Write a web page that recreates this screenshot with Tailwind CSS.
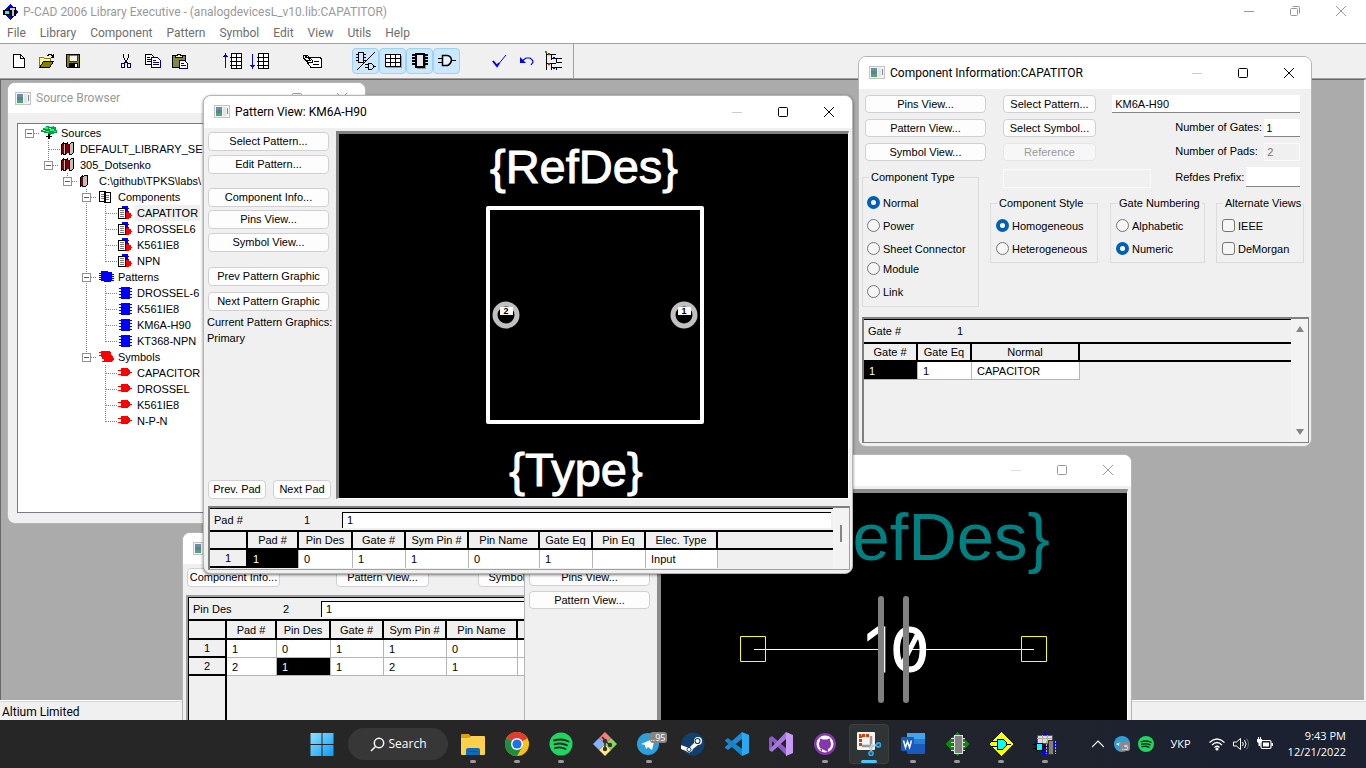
<!DOCTYPE html>
<html lang="en">
<head>
<meta charset="utf-8">
<title>P-CAD 2006 Library Executive</title>
<script src="https://cdn.jsdelivr.net/npm/@tailwindcss/browser@4"></script>
</head>
<body class="relative h-screen overflow-hidden flex flex-col bg-[#ababab] text-black text-[11px] leading-4 font-['Liberation_Sans',Arial,sans-serif] select-none">

<svg class="hidden">
  <symbol id="i-win" viewBox="0 0 16 13"><rect x=".5" y=".5" width="15" height="12" fill="#f4f4f4" stroke="#c4c4c4"/><path d="M2 2h6v9H2z" fill="#4f8a90"/><path d="M2 2h6v3H2z" fill="#6f8ca8"/><path d="M2 8h6v3H2z" fill="#58a07a"/><path d="M9 2h3v9H9z" fill="#e4e4e4"/><path d="M13 3h1v6h-1z" fill="#7c8a92"/></symbol>
  <symbol id="i-min" viewBox="0 0 12 12"><path d="M1 6.500h10" stroke="currentColor" fill="none"/></symbol>
  <symbol id="i-max" viewBox="0 0 12 12"><rect x="1.500" y="1.500" width="9" height="9" rx="1" stroke="currentColor" fill="none"/></symbol>
  <symbol id="i-close" viewBox="0 0 12 12"><path d="M1 1l10 10M11 1L1 11" stroke="currentColor" fill="none"/></symbol>
  <symbol id="i-tree" viewBox="0 0 20 16"><path d="M5 3h2V1h8v1h2v3h1v3h-3v1h-3v1h-1V9H9V8H5V7H2V5h2V3z" fill="#00a04a"/><path d="M6 2h3v2H6zM11 4h4v2h-4zM7 6h3v1H7zM15 6h2v1h-2z" fill="#2bff3a"/><path d="M10 1h4v1h-4zM4 5h2v1H4zM10 3h2v1h-2z" fill="#9be8d0"/><path d="M9 9h2v5H9zM7 11h2v1H7zM11 11h2v1h-2z" fill="#000"/></symbol>
  <symbol id="i-books" viewBox="0 0 20 16"><g stroke="#000"><path d="M3.500 3.500l2-2v10l-2 2z" fill="#8b0000"/><path d="M5.500 3.500l1-1h2v10l-1 1h-2z" fill="#c0c0c0"/><path d="M7.500 3.500l2-2v10l-2 2z" fill="#8b0000"/><path d="M11.500 3.500l2-2h2v10l-2 2h-2z" fill="#c0c0c0"/></g><path d="M4 4h2v8H4zM9 3h2v9H9z" fill="#8b0000"/></symbol>
  <symbol id="i-book" viewBox="0 0 20 16"><g stroke="#000"><path d="M3.500 4.500l2-2v9l-2 2z" fill="#8b0000"/><path d="M5.500 4.500l2-2h3v9l-2 2h-3z" fill="#c0c0c0"/></g><path d="M4 4h2v8H4z" fill="#8b0000"/></symbol>
  <symbol id="i-comps" viewBox="0 0 20 16"><g stroke="#000" fill="#fff"><path d="M3.500 2.500h6v10h-6zM8.500 3.500h6v10h-6z"/><path d="M5 5.500h3M5 7.500h3M5 9.500h3M10 6.500h3M10 8.500h3M10 10.500h3" stroke="#777"/></g></symbol>
  <symbol id="i-comp" viewBox="0 0 20 16"><path d="M7 1h6v2h1v1h-1v2h1v1h-7z" fill="#00f"/><path d="M10 7h4v1h2v2h1v1h-1v2h-2v1h-5z" fill="#f00"/><path d="M3.500 3.500h7v10h-7z" fill="#fff" stroke="#000"/><path d="M5 5.500h4M5 7.500h4M5 9.500h4M5 11.500h4" stroke="#777"/></symbol>
  <symbol id="i-pats" viewBox="0 0 20 16"><path d="M5 2h7v1h4v9h-1v1H8v-1H5z" fill="#00f"/><path d="M3 4.500h2M3 6.500h2M3 8.500h2M3 10.500h2M16 5.500h2M16 7.500h2M16 9.500h2M16 11.500h2" stroke="#00f"/></symbol>
  <symbol id="i-pat" viewBox="0 0 20 16"><path d="M6 2h9v12H6z" fill="#00f"/><path d="M4 3.500h13M4 6.500h13M4 9.500h13M4 12.500h13" stroke="#00f"/></symbol>
  <symbol id="i-syms" viewBox="0 0 20 16"><path d="M5 2h8l2 2v2l2 2v1l1 1-3 3H8v-3H6V8H5z" fill="#f00"/><path d="M3 3.500h3M3 6.500h3M6 9.500h3M6 12.500h3" stroke="#f00"/></symbol>
  <symbol id="i-sym" viewBox="0 0 20 16"><path d="M6 3h6l2 2 1 1v1h2v1h-2v1l-3 2H6z" fill="#f00"/><path d="M3 5.500h4M3 9.500h4" stroke="#f00"/></symbol>
</svg>

<!-- Application title -->
<header class="h-[23px] shrink-0 bg-white flex items-center pl-[2px] text-[12px] font-[Roboto,sans-serif] text-[#999]">
  <svg class="w-4 h-4 mr-[5px]" viewBox="0 0 16 16" shape-rendering="crispEdges"><path d="M8 0l8 8-8 8-8-8z" fill="#00f"/><path d="M6 3h8v9h-3v2H9v-3H6z" fill="#000"/><path d="M8 4h5v2H8z" fill="#ccc"/><path d="M10 6h2v6h-2z" fill="#c0c0c0"/><path d="M1 6h7v5H1z" fill="#000"/><path d="M3 7h4v3H3z" fill="#0ff"/></svg>
  <h1>P-CAD 2006 Library Executive - (analogdevicesL_v10.lib:CAPATITOR)</h1>
  <div class="ml-auto flex gap-[34px] pr-[19px] pb-[2px] text-[#999]">
    <button aria-label="Minimize"><svg class="size-3"><use href="#i-min"/></svg></button>
    <button aria-label="Restore"><svg class="size-3" viewBox="0 0 12 12" fill="none" stroke="currentColor"><rect x="1.500" y="3.500" width="7" height="7" rx="1"/><path d="M3.500 1.500h6q1 0 1 1v6"/></svg></button>
    <button aria-label="Close"><svg class="size-3"><use href="#i-close"/></svg></button>
  </div>
</header>

<nav class="h-[20px] shrink-0 bg-white flex items-center pl-[7px] gap-[14px] text-[12px] font-[Roboto,sans-serif] text-[#6d6d6d]">
  <a href="#">File</a><a href="#">Library</a><a href="#">Component</a><a href="#">Pattern</a><a href="#">Symbol</a><a href="#">Edit</a><a href="#">View</a><a href="#">Utils</a><a href="#">Help</a>
</nav>

<!-- Toolbar -->
<div class="h-[36px] shrink-0 bg-[#f0f0f0] border-t border-[#a0a0a0] border-b border-b-[#a0a0a0] flex">
  <div class="flex items-center pb-px gap-[26px] pl-[5px] pr-[6px] border-r border-[#a0a0a0] [&_button]:w-[27px] [&_button]:h-[26px] [&_button]:flex [&_button]:items-center [&_button]:justify-center [&_svg]:w-5 [&_svg]:h-5">
    <div class="flex">
      <button aria-label="New"><svg viewBox="0 0 20 20" shape-rendering="crispEdges"><path d="M4.500 3.500h7l4 4v9h-11z" fill="#fff" stroke="#000"/><path d="M11.500 3.500v4h4" fill="none" stroke="#000"/></svg></button>
      <button aria-label="Open"><svg viewBox="0 0 20 20" shape-rendering="crispEdges"><path d="M3.500 15.500v-9h4l1 1h6v3" fill="#ffff7a" stroke="#808000"/><path d="M3.500 16.500l4-6h10l-4 6z" fill="#808000" stroke="#000"/><path d="M11 4.500h1l1-1h2l1 1 1 1M17.500 3v4M15 6.500h3" fill="none" stroke="#000"/></svg></button>
      <button aria-label="Save"><svg viewBox="0 0 20 20" shape-rendering="crispEdges"><path d="M3.500 3.500h13v13h-12l-1-1z" fill="#808000" stroke="#000"/><path d="M6 4h8v6H6z" fill="#f0f0f0" stroke="#000" stroke-width=".5"/><path d="M6 12h9v4H6z" fill="#000"/><path d="M12 13h2v3h-2z" fill="#fff"/></svg></button>
    </div>
    <div class="flex">
      <button aria-label="Cut"><svg viewBox="0 0 20 20" fill="none" shape-rendering="crispEdges"><path d="M7.500 3v3l1 2 1 2 1 2M12.500 3v3l-1 2-2 4" stroke="#000"/><path d="M9 11l-1 2M11 11l1 2" stroke="#000080"/><rect x="5.500" y="12.500" width="3" height="4" rx="1" stroke="#000080"/><rect x="11.500" y="12.500" width="3" height="4" rx="1" stroke="#000080"/></svg></button>
      <button aria-label="Copy"><svg viewBox="0 0 20 20" shape-rendering="crispEdges"><path d="M2.500 3.500h6l2 2v8h-8z" fill="#fff" stroke="#000"/><path d="M4 6.500h3M4 8.500h5M4 10.500h5" stroke="#000"/><path d="M8.500 6.500h6l3 3v7h-9z" fill="#fff" stroke="#000080"/><path d="M10 9.500h3M10 11.500h6M10 13.500h6" stroke="#000080"/></svg></button>
      <button aria-label="Paste"><svg viewBox="0 0 20 20" shape-rendering="crispEdges"><path d="M2.500 4.500h13v12h-13z" fill="#87864a" stroke="#000"/><path d="M5.500 5.500v-1h2v-1h3v1h2v2h-7z" fill="#ffff66" stroke="#000"/><path d="M9.500 9.500h5l3 3v5h-8z" fill="#fff" stroke="#000080"/><path d="M11 12.500h3M11 14.500h5" stroke="#000080"/></svg></button>
    </div>
    <div class="flex">
      <button aria-label="Move up"><svg viewBox="0 0 20 20" shape-rendering="crispEdges" fill="none"><path d="M2.500 2v15M0 5.500h5M1 4.500h3" stroke="#00f"/><path d="M8.500 2.500h10v15h-10z" fill="#fff" stroke="#000"/><path d="M7 6.500h12M7 10.500h12M7 14.500h12M13.500 3v14" stroke="#000"/></svg></button>
      <button aria-label="Move down"><svg viewBox="0 0 20 20" shape-rendering="crispEdges" fill="none"><path d="M2.500 3v15M0 14.500h5M1 15.500h3" stroke="#00f"/><path d="M8.500 2.500h10v15h-10z" fill="#fff" stroke="#000"/><path d="M7 6.500h12M7 10.500h12M7 14.500h12M13.500 3v14" stroke="#000"/></svg></button>
    </div>
    <div class="flex">
      <button aria-label="Rename"><svg viewBox="0 0 20 20" fill="none" stroke="#000" shape-rendering="crispEdges"><path d="M7 6.500h10l1 1v9H8l-3-4z" fill="#fff"/><path d="M.5 4.500h4l5 5v2H5l-4-4z" fill="#fff"/><path d="M2 6.500h3l2 2M2 5.500h2M4 9.500h4"/><path d="M11 10.500h5M10 13.500h6"/></svg></button>
    </div>
    <div class="flex [&_button]:bg-[#cce8ff] [&_button]:border [&_button]:border-[#99d1ff] [&_button]:rounded-sm">
      <button aria-label="Pattern and symbol"><svg viewBox="0 0 20 20" fill="none" stroke="#000" shape-rendering="crispEdges"><path d="M2.500 1.500h5v10h-5zM0 3.500h2M0 6.500h2M0 9.500h2M8 3.500h2M8 6.500h2M8 9.500h2"/><path d="M19 1L1 19" shape-rendering="auto"/><path d="M12.500 12.500h3l2 2v2l-2 2h-3zM9 13.500h3M9 16.500h3M18 15.500h2"/></svg></button>
      <button aria-label="Pins table"><svg viewBox="0 0 20 20" shape-rendering="crispEdges"><path d="M3 5h16v12H3z" fill="#999"/><path d="M2.500 3.500h15v12h-15z" fill="#fff" stroke="#000"/><path d="M2 7.500h15M2 11.500h15M7.500 3v13M12.500 3v13" stroke="#000"/></svg></button>
      <button aria-label="Pattern"><svg viewBox="0 0 20 20" fill="none" shape-rendering="crispEdges"><path d="M7 4h9v14H7z" fill="#999"/><path d="M6 3h8v13H6z" stroke="#000" stroke-width="2" fill="#e4e8ec"/><path d="M2 4h3M2 7h3M2 10h3M2 13h3M15 4h3M15 7h3M15 10h3M15 13h3" stroke="#000" stroke-width="2"/></svg></button>
      <button aria-label="Symbol"><svg viewBox="0 0 20 20" fill="none" stroke="#000"><path d="M5.500 4.500h5q4 1 4 5-1 4-4 5h-5z" fill="#e8f4ff" stroke-width="1.500"/><path d="M1 7.500h5M1 11.500h5M15 9.500h4" shape-rendering="crispEdges"/></svg></button>
    </div>
    <div class="flex">
      <button aria-label="Validate"><svg viewBox="0 0 20 20" fill="none" stroke="#00f"><path d="M3 10l4 5L16 4" stroke-width="1"/><path d="M3 10l4 5 2-3" stroke-width="2"/></svg></button>
      <button aria-label="Undo"><svg viewBox="0 0 20 20" fill="none" stroke="#00f"><path d="M5 10l4-3h4q3 2 3 4l-2 3" stroke-width="1.200"/><path d="M3 6v6h6z" fill="#00f" stroke="none"/></svg></button>
      <button aria-label="Hierarchy"><svg viewBox="0 0 20 20" fill="none" stroke="#000" shape-rendering="crispEdges"><path d="M2.500 1v18M2 3.500h10M7.500 4v5M7 7.500h11M12.500 8v4M12 11.500h6M2 12.500h10M7.500 13v6M7 16.500h11M12.500 16v3"/><path d="M1 0h2v2H1z" fill="#0a0" stroke="none"/><path d="M4 2h2v2H4zM4 12h2v2H4z" fill="#f00" stroke="none"/><path d="M9 6h2v2H9zM9 16h2v2H9z" fill="#00f" stroke="none"/></svg></button>
    </div>
  </div>
</div>

<!-- Document area -->
<div class="flex-1 border-t border-l border-[#696969] border-r-2 border-r-[#f0f0f0]"></div>

<footer class="h-[20px] shrink-0 bg-[#f0f0f0] border-t border-white flex items-center pl-[2px] pt-[3px] shadow-[inset_0_1px_0_#d9d9d9]">
  <span class="font-[Roboto,sans-serif] text-[12px]">Altium Limited</span>
</footer>

<!-- Source Browser -->
<section class="absolute left-[7px] top-[82px] w-[359px] h-[442px] rounded-lg border border-[#b5b5b5] bg-[#f0f0f0] overflow-hidden flex flex-col">
  <div class="h-[30px] shrink-0 bg-white flex items-center pl-[7px] pr-[17px] gap-[5px] text-[#999]">
    <svg class="w-4 h-[13px]"><use href="#i-win"/></svg>
    <h2 class="font-[Roboto,sans-serif] text-[12px]">Source Browser</h2>
    <button class="ml-auto mr-[28px]" aria-label="Maximize"><svg class="size-3"><use href="#i-max"/></svg></button>
    <button aria-label="Close"><svg class="size-3"><use href="#i-close"/></svg></button>
  </div>
  <div id="tree" role="tree" class="flex-1 ml-[9px] mr-[9px] mt-[10px] mb-[10px] border border-[#7a7a84] bg-white pl-[2px] pt-px"></div>
</section>

<!-- Pins View -->
<section class="absolute left-[182px] top-[532px] w-[400px] h-[220px] rounded-tl-lg border border-[#b5b5b5] bg-[#f0f0f0] overflow-hidden flex flex-col">
  <div class="h-[31px] shrink-0 bg-white flex items-center pl-[10px]"><svg class="w-4 h-[13px]"><use href="#i-win"/></svg></div>
  <div class="flex pl-[4px] pt-[4px] [&_button]:w-[93px] [&_button]:shrink-0 [&_button]:h-[19px] [&_button]:leading-[17px] [&_button]:rounded [&_button]:border [&_button]:border-[#d0d0d0] [&_button]:bg-[#fdfdfd]">
    <button>Component Info...</button>
    <button class="ml-[56px]">Pattern View...</button>
    <button class="ml-[49px]">Symbol View...</button>
  </div>
  <div class="mt-[8px] ml-[3px] flex-1 border-t-2 border-l-2 border-[#a0a0a0] flex flex-col">
    <div class="flex-1 border-t border-l border-black">
      <div class="flex items-center h-[21px]">
        <label for="pin" class="w-[94px] pl-[4px]">Pin Des</label><span class="w-[38px]">2</span>
        <input id="pin" value="1" class="flex-1 min-w-0 h-[16px] border-t border-l border-black bg-white pl-[4px] outline-none">
      </div>
      <table class="w-full table-fixed border-separate border-spacing-0 border-t-2 border-black [&_th]:font-normal [&_th]:h-[19px] [&_th]:p-0 [&_th]:border-r-2 [&_th]:border-b-2 [&_th]:border-black [&_th]:bg-[#f0f0f0] [&_td]:h-[18px] [&_td]:py-0 [&_td]:pl-[5px] [&_td]:bg-white [&_td]:border-r [&_td]:border-b [&_td]:border-[#b5b5b5]">
        <colgroup><col class="w-[38px]"><col class="w-[50px]"><col class="w-[54px]"><col class="w-[53px]"><col class="w-[63px]"><col class="w-[71px]"><col></colgroup>
        <thead><tr><th></th><th>Pad #</th><th>Pin Des</th><th>Gate #</th><th>Sym Pin #</th><th>Pin Name</th><th class="!border-r-0"></th></tr></thead>
        <tbody>
          <tr><th class="!h-[18px]">1</th><td>1</td><td>0</td><td>1</td><td>1</td><td>0</td><td></td></tr>
          <tr><th class="!h-[18px]">2</th><td>2</td><td class="!bg-black text-white">1</td><td>1</td><td>2</td><td>1</td><td></td></tr>
        </tbody>
      </table>
      <div class="w-[38px] h-[80px] border-r-2 border-black"></div>
    </div>
  </div>
</section>

<!-- Symbol View -->
<section class="absolute left-[524px] top-[454px] w-[608px] h-[300px] rounded-t-lg border border-[#b5b5b5] bg-[#f0f0f0] overflow-hidden flex flex-col">
  <div class="h-[31px] shrink-0 bg-white flex items-center justify-end gap-[34px] pr-[17px] pb-[2px] text-[#999]">
    <button aria-label="Minimize" class="text-[#ddd]"><svg class="size-3"><use href="#i-min"/></svg></button>
    <button aria-label="Maximize"><svg class="size-3"><use href="#i-max"/></svg></button>
    <button aria-label="Close"><svg class="size-3"><use href="#i-close"/></svg></button>
  </div>
  <div class="flex-1 flex pt-[3px] pr-[3px]">
    <div class="w-[132px] shrink-0 flex flex-col gap-[5px] pl-[4px] pt-[79px]">
      <button class="w-[121px] h-[18px] leading-4 rounded border border-[#d0d0d0] bg-[#fdfdfd]">Pins View...</button>
      <button class="w-[121px] h-[18px] leading-4 rounded border border-[#d0d0d0] bg-[#fdfdfd]">Pattern View...</button>
    </div>
    <div class="flex-1 border-t-4 border-l-4 border-[#8c8c8c] border-r border-r-white bg-black">
      <svg class="w-full h-full" viewBox="661 493 466 260" preserveAspectRatio="xMidYMin slice" font-family="Liberation Sans, Arial, sans-serif">
        <text x="1050" y="560" text-anchor="end" font-size="67" fill="#008080">{RefDes}</text>
        <text x="865" y="672" font-size="62" fill="#fff" stroke="#fff" stroke-width="1" class="slashed-zero font-[Inter,sans-serif]">10</text>
        <path d="M754 649.500h124M909 649.500h125" stroke="#fff"/>
        <path d="M881 599v101M906 599v101" stroke="#808080" stroke-width="6" stroke-linecap="round"/>
        <path d="M740.500 636.500h25v25h-25zM1021.500 636.500h25v25h-25z" fill="none" stroke="#ff0"/>
      </svg>
    </div>
  </div>
</section>

<!-- Pattern View -->
<section class="absolute left-[203px] top-[95px] w-[650px] h-[479px] rounded-lg border border-[#b5b5b5] bg-[#f0f0f0] overflow-hidden flex flex-col shadow-[0_1px_3px_#0008]">
  <div class="h-[32px] shrink-0 bg-white flex items-center pl-[10px] pr-[17px] pb-px gap-[5px]">
    <svg class="w-4 h-[13px]"><use href="#i-win"/></svg>
    <h2 class="font-[Roboto,sans-serif] text-[12px]">Pattern View: KM6A-H90</h2>
    <button class="ml-auto text-[#ccc]" aria-label="Minimize"><svg class="size-3"><use href="#i-min"/></svg></button>
    <button class="mx-[29px]" aria-label="Maximize"><svg class="size-3"><use href="#i-max"/></svg></button>
    <button aria-label="Close"><svg class="size-3"><use href="#i-close"/></svg></button>
  </div>
  <div class="flex-1 flex pt-[3px] pr-[3px] min-h-0">
    <div class="w-[132px] shrink-0 flex flex-col pl-[4px] pt-px [&_button]:w-[121px] [&_button]:h-[19px] [&_button]:leading-[17px] [&_button]:rounded [&_button]:border [&_button]:border-[#d0d0d0] [&_button]:bg-[#fdfdfd]">
      <div class="flex flex-col gap-[4px]"><button>Select Pattern...</button><button>Edit Pattern...</button></div>
      <div class="flex flex-col gap-[3px] mt-[14px]"><button>Component Info...</button><button>Pins View...</button><button class="mt-px">Symbol View...</button></div>
      <div class="flex flex-col gap-[6px] mt-[15px]"><button>Prev Pattern Graphic</button><button>Next Pattern Graphic</button></div>
      <p class="mt-[3px] -ml-px whitespace-nowrap">Current Pattern Graphics:<br>Primary</p>
      <div class="mt-auto flex gap-[7px] [&>button]:!w-[58px]"><button>Prev. Pad</button><button>Next Pad</button></div>
    </div>
    <div class="flex-1 border-t-[3px] border-l-[3px] border-[#808080] border-r border-b border-r-white border-b-white bg-black">
      <svg class="w-full h-full" viewBox="339 134 509 364" font-family="Liberation Sans, Arial, sans-serif">
        <text x="584" y="183" text-anchor="middle" font-size="47" fill="#fff" stroke="#fff" stroke-width="1">{RefDes}</text>
        <text x="576" y="486" text-anchor="middle" font-size="47" fill="#fff" stroke="#fff" stroke-width="1">{Type}</text>
        <rect x="488" y="208" width="214" height="214" fill="none" stroke="#fff" stroke-width="4" stroke-linejoin="round"/>
        <g fill="#000" stroke="#c0c0c0" stroke-width="5"><circle cx="506" cy="315" r="11"/><circle cx="684" cy="315" r="11"/></g>
        <path d="M500 307h13v8h-13zM678 307h13v8h-13z" fill="#fff"/>
        <g font-size="9" font-weight="bold" text-anchor="middle"><text x="506" y="314">2</text><text x="684" y="314">1</text></g>
      </svg>
    </div>
  </div>
  <div class="h-[64px] shrink-0 mt-[7px] ml-[4px] mr-[2px] mb-[3px] border-2 border-[#808080] border-b-[#a0a0a0] border-b border-r border-r-[#a0a0a0] flex">
    <div class="flex-1 border-t border-black overflow-hidden">
      <div class="flex items-center h-[21px]">
        <label for="pad" class="w-[94px] pl-[4px]">Pad #</label><span class="w-[38px]">1</span>
        <input id="pad" value="1" class="flex-1 mr-[2px] h-[16px] border-t border-l border-black bg-white pl-[4px] outline-none">
      </div>
      <table class="w-full table-fixed border-separate border-spacing-0 border-t-2 border-black [&_th]:font-normal [&_th]:h-[18px] [&_th]:p-0 [&_th]:border-r-2 [&_th]:border-b-2 [&_th]:border-black [&_th]:bg-[#f0f0f0] [&_td]:h-[18px] [&_td]:py-0 [&_td]:pl-[5px] [&_td]:bg-white [&_td]:border-r [&_td]:border-[#b5b5b5]">
        <colgroup><col class="w-[38px]"><col class="w-[51px]"><col class="w-[54px]"><col class="w-[53px]"><col class="w-[63px]"><col class="w-[71px]"><col class="w-[53px]"><col class="w-[53px]"><col class="w-[72px]"><col></colgroup>
        <thead><tr><th></th><th>Pad #</th><th>Pin Des</th><th>Gate #</th><th>Sym Pin #</th><th>Pin Name</th><th>Gate Eq</th><th>Pin Eq</th><th>Elec. Type</th><th class="!border-r-0"></th></tr></thead>
        <tbody><tr><th class="!h-[18px]">1</th><td class="!bg-black text-white">1</td><td>0</td><td>1</td><td>1</td><td>0</td><td>1</td><td></td><td>Input</td><td class="!bg-[#f0f0f0] !border-0"></td></tr></tbody>
      </table>
    </div>
    <div class="w-[16px] pt-[17px] flex justify-center bg-[#f3f3f3]"><div class="w-[2px] h-[17px] bg-[#858585]"></div></div>
  </div>
</section>

<!-- Component Information -->
<section class="absolute left-[858px] top-[56px] w-[454px] h-[391px] rounded-lg border border-[#b5b5b5] bg-[#f0f0f0] overflow-hidden flex flex-col">
  <div class="h-[32px] shrink-0 bg-white flex items-center pl-[10px] pr-[16px] pb-px gap-[5px]">
    <svg class="w-4 h-[13px]"><use href="#i-win"/></svg>
    <h2 class="font-[Roboto,sans-serif] text-[12px]">Component Information:CAPATITOR</h2>
    <button class="ml-auto text-[#ccc]" aria-label="Minimize"><svg class="size-3"><use href="#i-min"/></svg></button>
    <button class="mx-[29px]" aria-label="Maximize"><svg class="size-3"><use href="#i-max"/></svg></button>
    <button aria-label="Close"><svg class="size-3"><use href="#i-close"/></svg></button>
  </div>
  <div class="flex pl-[6px] pr-[9px] pt-[6px] h-[228px] shrink-0">
    <div class="w-[121px] shrink-0 flex flex-col gap-[6px]">
      <button class="h-[18px] leading-4 rounded border border-[#d0d0d0] bg-[#fdfdfd]">Pins View...</button>
      <button class="h-[18px] leading-4 rounded border border-[#d0d0d0] bg-[#fdfdfd]">Pattern View...</button>
      <button class="h-[18px] leading-4 rounded border border-[#d0d0d0] bg-[#fdfdfd]">Symbol View...</button>
      <fieldset class="-ml-[3px] mr-[7px] mt-[2px] border border-[#dcdcdc] h-[138px] pl-[4px] pt-[11px] flex flex-col gap-[10px] [&_label]:flex [&_label]:items-center [&_label]:gap-[3px] [&_label]:h-[13px] [&_input]:appearance-none [&_input]:size-[13px] [&_input]:rounded-full [&_input]:border [&_input]:border-[#767676] [&_input]:bg-[#f6f6f6] [&_input:checked]:border-4 [&_input:checked]:border-[#005fb8] [&_input:checked]:bg-white">
        <legend class="ml-[2px] px-[2px]">Component Type</legend>
        <label><input type="radio" name="type" checked>Normal</label>
        <label><input type="radio" name="type">Power</label>
        <label><input type="radio" name="type">Sheet Connector</label>
        <label class="-mt-[3px]"><input type="radio" name="type">Module</label>
        <label><input type="radio" name="type">Link</label>
      </fieldset>
    </div>
    <div class="flex-1 pl-[17px] flex flex-col gap-[6px]">
      <div class="flex justify-between h-[18px]">
        <button class="w-[93px] leading-4 rounded border border-[#d0d0d0] bg-[#fdfdfd]">Select Pattern...</button>
        <input aria-label="Pattern name" value="KM6A-H90" class="w-[188px] mr-[4px] bg-white border-b border-[#858585] pl-[3px] outline-none">
      </div>
      <div class="flex justify-between h-[18px]">
        <button class="w-[93px] leading-4 rounded border border-[#d0d0d0] bg-[#fdfdfd]">Select Symbol...</button>
        <div class="w-[125px] mr-[4px] flex justify-between"><label for="gates">Number of Gates:</label><input id="gates" value="1" class="w-[36px] bg-white border-b border-[#858585] pl-[2px] outline-none"></div>
      </div>
      <div class="flex justify-between h-[18px]">
        <button disabled class="w-[93px] leading-4 rounded border border-[#e6e6e6] bg-[#f7f7f7] text-[#999]">Reference</button>
        <div class="w-[125px] mr-[4px] flex justify-between"><label for="pads">Number of Pads:</label><input id="pads" disabled value="2" class="w-[36px] border border-[#fafafa] text-[#777] pl-[2px]"></div>
      </div>
      <div class="flex justify-between h-[20px]">
        <input aria-label="Reference name" disabled class="w-[148px] h-[19px] mt-[2px] border border-[#fafafa]">
        <div class="w-[125px] mr-[4px] flex justify-between items-center"><label for="prefix">Refdes Prefix:</label><input id="prefix" class="w-[54px] h-[20px] bg-white border-b border-[#858585] outline-none"></div>
      </div>
      <div class="-ml-[13px] mt-[2px] flex gap-[12px] [&_fieldset]:h-[68px] [&_fieldset]:border [&_fieldset]:border-[#dcdcdc] [&_fieldset]:pl-[5px] [&_fieldset]:pt-[8px] [&_fieldset]:flex [&_fieldset]:flex-col [&_fieldset]:gap-[10px] [&_legend]:ml-[1px] [&_legend]:px-[2px] [&_label]:flex [&_label]:items-center [&_label]:gap-[3px] [&_label]:h-[13px] [&_input]:appearance-none [&_input]:size-[13px] [&_input]:border [&_input]:border-[#767676] [&_input]:bg-[#f6f6f6] [&_input[type=radio]]:rounded-full [&_input[type=checkbox]]:rounded-[3px] [&_input:checked]:border-4 [&_input:checked]:border-[#005fb8] [&_input:checked]:bg-white">
        <fieldset class="w-[108px] whitespace-nowrap"><legend>Component Style</legend><label><input type="radio" name="style" checked>Homogeneous</label><label><input type="radio" name="style">Heterogeneous</label></fieldset>
        <fieldset class="w-[95px] whitespace-nowrap"><legend>Gate Numbering</legend><label><input type="radio" name="num">Alphabetic</label><label><input type="radio" name="num" checked>Numeric</label></fieldset>
        <fieldset class="w-[86px] -ml-px whitespace-nowrap"><legend>Alternate Views</legend><label><input type="checkbox">IEEE</label><label><input type="checkbox">DeMorgan</label></fieldset>
      </div>
    </div>
  </div>
  <div class="flex-1 ml-[3px] mr-[2px] mb-[3px] border-2 border-[#808080] border-r border-b flex">
    <div class="flex-1 border-t border-black">
      <div class="flex items-center h-[22px]"><span class="w-[93px] pl-[4px]">Gate #</span><span>1</span></div>
      <table class="w-full table-fixed border-separate border-spacing-0 border-t-2 border-black [&_th]:font-normal [&_th]:h-[18px] [&_th]:p-0 [&_th]:border-r-2 [&_th]:border-b-2 [&_th]:border-black [&_td]:h-[18px] [&_td]:py-0 [&_td]:pl-[5px] [&_td]:bg-white [&_td]:border-r [&_td]:border-b [&_td]:border-[#b5b5b5]">
        <colgroup><col class="w-[54px]"><col class="w-[54px]"><col class="w-[108px]"><col></colgroup>
        <thead><tr><th>Gate #</th><th>Gate Eq</th><th>Normal</th><th class="!border-r-0"></th></tr></thead>
        <tbody><tr><td class="!bg-black text-white">1</td><td>1</td><td>CAPACITOR</td><td class="!bg-transparent !border-0"></td></tr></tbody>
      </table>
    </div>
    <div class="w-[17px] flex flex-col items-center justify-between py-[6px] bg-[#f3f3f3] text-[#858585]">
      <svg class="w-[10px] h-[8px]" viewBox="0 0 10 8"><path d="M5 1l4 6H1z" fill="currentColor"/></svg>
      <svg class="w-[10px] h-[8px]" viewBox="0 0 10 8"><path d="M5 7l4-6H1z" fill="currentColor"/></svg>
    </div>
  </div>
</section>

<!-- Taskbar -->
<div class="relative z-10 h-[48px] shrink-0 grid grid-cols-[1fr_auto_1fr] text-white bg-linear-to-r from-[#262626] from-50% to-[#1b2130] to-90% font-['Open_Sans',sans-serif]">
  <div></div>
  <div class="flex items-center [&>button]:relative [&>button]:w-[44px] [&>button]:h-[48px] [&>button]:flex [&>button]:items-center [&>button]:justify-center [&_svg]:size-6 [&_i]:absolute [&_i]:bottom-[5px] [&_i]:w-[6px] [&_i]:h-[3px] [&_i]:rounded-full [&_i]:bg-[#9a9a9a]">
    <button aria-label="Start"><svg viewBox="0 0 24 24"><defs><linearGradient id="wg" x1="0" y1="0" x2="1" y2="1"><stop offset="0" stop-color="#8fe0ff"/><stop offset="1" stop-color="#0a9bf5"/></linearGradient></defs><path d="M.5 1h11v11H.5zM12.500 1h11v11h-11zM.5 13h11v11H.5zM12.500 13h11v11h-11z" fill="url(#wg)"/></svg></button>
    <div class="ml-[4px] mr-[3px] w-[100px] h-[32px] rounded-full bg-[#373737] flex items-center gap-[4px] pl-[22px] text-[12px]"><svg class="!size-[15px]" viewBox="0 0 15 15" fill="none" stroke="#fff" stroke-width="1.500"><circle cx="9" cy="6" r="4.700"/><path d="M5.500 9.500L1 14"/></svg>Search</div>
    <button aria-label="File Explorer"><svg viewBox="0 0 24 24"><path d="M0 3q0-1 1-1h7l2 3v4H0z" fill="#dfa00c"/><path d="M0 6h8l2-2h13q1 0 1 1v17q0 1-1 1H1q-1 0-1-1z" fill="#ffd04c"/><path d="M5 23v-5q0-2 2-2h10q2 0 2 2v5z" fill="#0f6cbd"/><path d="M8 19h8v1H8z" fill="#0a4f91"/></svg><i></i></button>
    <button aria-label="Chrome"><svg viewBox="0 0 24 24"><circle cx="12" cy="12" r="12" fill="#fbc116"/><path d="M12 12L1.600 6A12 12 0 0 1 22.400 6z" fill="#e33b2e"/><path d="M12 6h10.400L12 12z" fill="#e33b2e"/><path d="M1.600 6A12 12 0 0 0 12 24l5.200-9L12 12z" fill="#1e8e3e"/><circle cx="12" cy="12" r="6" fill="#fff"/><circle cx="12" cy="12" r="4.600" fill="#1a73e8"/></svg><i></i></button>
    <button aria-label="Spotify"><svg viewBox="0 0 24 24"><circle cx="12" cy="12" r="11.500" fill="#1ed760"/><path d="M5 8.500q8-2.500 14.500 1M5.500 12.300q7-2 12.500 1M6 16q6-1.700 10.500 1" fill="none" stroke="#1c2b21" stroke-width="1.900" stroke-linecap="round"/></svg><i></i></button>
    <button aria-label="Git Bash"><svg viewBox="0 0 24 24"><path d="M12 0l6 6-6 6-6-6z" fill="#f57e7e"/><path d="M6 6l6 6-6 6-6-6z" fill="#80b3ff"/><path d="M18 6l6 6-6 6-6-6z" fill="#8dd35f"/><path d="M12 12l6 6-6 6-6-6z" fill="#ffe680"/><path d="M9 5l3 3v9M12 9l5 4" fill="none" stroke="#333" stroke-width="1.600"/><g fill="#333"><circle cx="12" cy="9" r="2.200"/><circle cx="12" cy="17" r="2.200"/><circle cx="17" cy="13" r="2.200"/></g></svg></button>
    <button aria-label="Telegram"><svg viewBox="0 0 24 24"><circle cx="11" cy="12" r="11" fill="#2ba0da"/><path d="M4 12l14-6-3 12-4-3-2 2-1-4z" fill="#fff"/></svg><i></i><span class="absolute left-[23px] top-[12px] w-[17px] h-[11px] rounded-[3px] bg-[#858585] text-[9px] leading-[11px] text-center">..95</span></button>
    <button aria-label="Steam"><svg viewBox="0 0 24 24"><circle cx="12" cy="12" r="11.500" fill="#123f6d"/><path d="M0 13l8 3 5-5v-2a4 4 0 1 1 4 4l-5 4a4 4 0 0 1-7 2l-5-2z" fill="#fff"/><circle cx="16.500" cy="9" r="2.500" fill="none" stroke="#17406b" stroke-width="1.200"/><circle cx="8" cy="17.500" r="2" fill="none" stroke="#17406b"/></svg></button>
    <button aria-label="Visual Studio Code"><svg viewBox="0 0 24 24"><path d="M17 0l7 3v18l-7 3z" fill="#2aa9f0"/><path d="M17 0v7L3 18l-3-2v-1z" fill="#1f8ad2"/><path d="M17 24v-7L3 6 0 8v1z" fill="#1684c9"/></svg></button>
    <button aria-label="Visual Studio"><svg viewBox="0 0 24 24"><path d="M0 6l3-2 15 13v7L3 9v7l-3 2z" fill="#8a5cc7"/><path d="M3 20l-3-2 17-18v7z" fill="#a777de"/><path d="M17 0l7 3v18l-7 3z" fill="#c89bf2"/></svg></button>
    <button aria-label="GitHub Desktop"><svg viewBox="0 0 24 24"><circle cx="12" cy="12" r="11" fill="#8637b0"/><circle cx="12" cy="12" r="8.500" fill="#fff"/><path d="M9 20v-3q-2 .5-3-1.500M9 17q-3-1-3-5 0-2 1-3-.3-1.500.2-2.500 1.200 0 2.500 1h4.600q1.300-1 2.500-1 .5 1 .2 2.500 1 1 1 3 0 4-3 5v3z" fill="#8637b0"/></svg><i></i></button>
    <button aria-label="Snipping Tool" class="before:absolute before:inset-x-[2px] before:inset-y-[4px] before:rounded before:border before:border-[#3c4242] before:bg-[#2e3534]"><svg class="relative" viewBox="0 0 24 24"><rect width="18" height="18" rx="1" fill="#f4f4f4"/><path d="M3.500 14V3.500H13" fill="none" stroke="#d83b01" stroke-width="3" stroke-dasharray="3 1"/><path d="M14 4v10H5" fill="none" stroke="#999" stroke-width="2.500"/><path d="M12 16l7-3M15 12l-1 7" stroke="#ccc" stroke-width="2"/><circle cx="21.500" cy="13" r="2" fill="none" stroke="#2aa4ee" stroke-width="1.800"/><circle cx="14" cy="21.500" r="2" fill="none" stroke="#2aa4ee" stroke-width="1.800"/></svg><i class="!w-[16px] !bg-[#4cc2ff]"></i></button>
    <button aria-label="Word"><svg viewBox="0 0 24 24"><rect x="6" y="1" width="18" height="21" rx="1" fill="#185abd"/><path d="M6 1h18v6H6z" fill="#41a5ee"/><path d="M6 7h18v5H6z" fill="#2b7cd3"/><rect y="5" width="13" height="14" rx="1" fill="#185abd"/><path d="M2.500 8.500L4.500 15.500 6.500 9.500 8.500 15.500 10.500 8.500" fill="none" stroke="#fff" stroke-width="1.500"/></svg><i></i></button>
    <button aria-label="Pattern Editor"><svg viewBox="0 0 24 24" shape-rendering="crispEdges"><path d="M12 0l12 12-12 12L0 12z" fill="#0a8a0a"/><path d="M9 3h8v18H9z" fill="#808080" stroke="#ddd"/><path d="M6 6h3M6 10h3M6 14h3M6 18h3M17 6h3M17 10h3M17 14h3M17 18h3" stroke="#ddd"/></svg><i></i></button>
    <button aria-label="Symbol Editor"><svg viewBox="0 0 24 24" shape-rendering="crispEdges"><path d="M12 0l12 12-12 12L0 12z" fill="#ff0"/><path d="M3 9.500h5M3 14.500h5M17 12h5" stroke="#000"/><path d="M8 7h6l3 3v4l-3 3H8z" fill="#0ff" stroke="#000"/></svg><i></i></button>
    <button aria-label="Library Executive"><svg viewBox="0 0 24 24" shape-rendering="crispEdges"><path d="M12 0l12 12-12 12L0 12z" fill="#00f"/><path d="M4 3h15v8H4z" fill="#ddd" stroke="#555"/><path d="M4 6h15M9 3v8M14 3v8" stroke="#aaa"/><path d="M0 12h3M0 16h3M9 14h4" stroke="#000"/><path d="M3 11h6v7H3z" fill="#0ff" stroke="#000"/><path d="M15 8h5v14h-5z" fill="#808080" stroke="#333"/><path d="M13 9v13M22 9v13" stroke="#cc0" stroke-dasharray="2 1"/></svg><i></i></button>
  </div>
  <div class="flex items-center justify-end pr-[20px] text-[11px]">
    <svg class="size-3" viewBox="0 0 12 12" fill="none" stroke="#fff" stroke-width="1.200"><path d="M0 9l6-6 6 6"/></svg>
    <svg class="ml-[10px] size-4" viewBox="0 0 16 16"><circle cx="8" cy="8" r="8" fill="#2ba0da"/><path d="M2 8l5-2v5z" fill="#fff"/><rect x="5" y="6" width="11" height="9" rx="2" fill="#8a8a8a"/><text x="11" y="14" font-size="8" fill="#fff" text-anchor="middle">.5</text></svg>
    <svg class="ml-[8px] size-4" viewBox="0 0 24 24"><circle cx="12" cy="12" r="12" fill="#1ed760"/><path d="M5 8.500q8-2.500 14.500 1M5.500 12.300q7-2 12.500 1M6 16q6-1.700 10.500 1" fill="none" stroke="#1c2b21" stroke-width="2.200" stroke-linecap="round"/></svg>
    <span class="ml-[16px]">УКР</span>
    <svg class="ml-[18px] size-4" viewBox="0 0 16 16" fill="none" stroke="#fff" stroke-width="1.200"><path d="M.5 6.500q7.500-7 15 0M3 9q5-5 10 0M5.500 11.500q2.500-2.500 5 0"/><circle cx="8" cy="13" r="1" fill="#fff"/></svg>
    <svg class="ml-[8px] size-4" viewBox="0 0 16 16" fill="none" stroke="#fff"><path d="M.5 6h3l4-3.500v11l-4-3.500h-3zM9.500 6q1.500 2 0 4M11.500 4q3 4 0 8"/><path d="M13.500 2.500q4 5.500 0 11" stroke="#666"/></svg>
    <svg class="ml-[8px] size-4" viewBox="0 0 16 16"><rect x="4" y="4.500" width="10" height="8" rx="1.500" fill="none" stroke="#fff" stroke-width="1.200"/><path d="M6 6.500h6v4H6zM14.500 7h1.500v3h-1.500z" fill="#fff"/><path d="M0 3h5v3L3.500 7v3h-2V7L0 6zM1 1h1v2H1zM3 1h1v2H3z" fill="#fff"/></svg>
    <div class="ml-[15px] text-right leading-4">9:43 PM<br>12/21/2022</div>
  </div>
</div>

<script>
// Each row: guide cells, icon, caption. v = line, t = branch, l = last branch, b/m/e = expander variants, space = blank
const rows = [
  ['b', 'tree', 'Sources'], [' t', 'books', 'DEFAULT_LIBRARY_SET'], [' e', 'books', '305_Dotsenko'],
  ['  e', 'book', 'C:\\github\\TPKS\\labs\\'], ['   m', 'comps', 'Components'],
  ['   vt', 'comp', 'CAPATITOR'], ['   vt', 'comp', 'DROSSEL6'], ['   vt', 'comp', 'K561IE8'], ['   vl', 'comp', 'NPN'],
  ['   m', 'pats', 'Patterns'], ['   vt', 'pat', 'DROSSEL-6'], ['   vt', 'pat', 'K561IE8'], ['   vt', 'pat', 'KM6A-H90'], ['   vl', 'pat', 'KT368-NPN'],
  ['   e', 'syms', 'Symbols'], ['    t', 'sym', 'CAPACITOR'], ['    t', 'sym', 'DROSSEL'], ['    t', 'sym', 'K561IE8'], ['    l', 'sym', 'N-P-N']
];
const lines = { ' ': '', v: 'M9.500 0v16', t: 'M9.500 0v16M10 8.500h11', l: 'M9.500 0v9M10 8.500h11', b: 'M14 8.500h6', m: 'M9.500 0v16M14 8.500h6', e: 'M9.500 0v4M14 8.500h6' };
document.getElementById('tree').innerHTML = rows.map(([g, icon, name]) =>
  '<div role="treeitem" class="flex h-4 whitespace-nowrap">' +
  [...g].map(c => '<svg class="w-[19px] h-4 shrink-0 overflow-visible" shape-rendering="crispEdges"><path d="' + lines[c] + '" stroke="#808080" stroke-dasharray="1 1"/>' +
    ('bme'.includes(c) ? '<rect x="5.500" y="4.500" width="8" height="8" rx="1" fill="#fff" stroke="#919191"/><path d="M7 8.500h5" stroke="#3a5fa8"/>' : '') + '</svg>').join('') +
  '<svg class="w-5 h-4 shrink-0" shape-rendering="crispEdges"><use href="#i-' + icon + '"/></svg>' +
  '<span class="' + (name === 'CAPATITOR' ? 'px-[2px] bg-[#f0f0f0]' : 'px-[2px]') + '">' + name + '</span></div>').join('');
</script>
</body>
</html>
